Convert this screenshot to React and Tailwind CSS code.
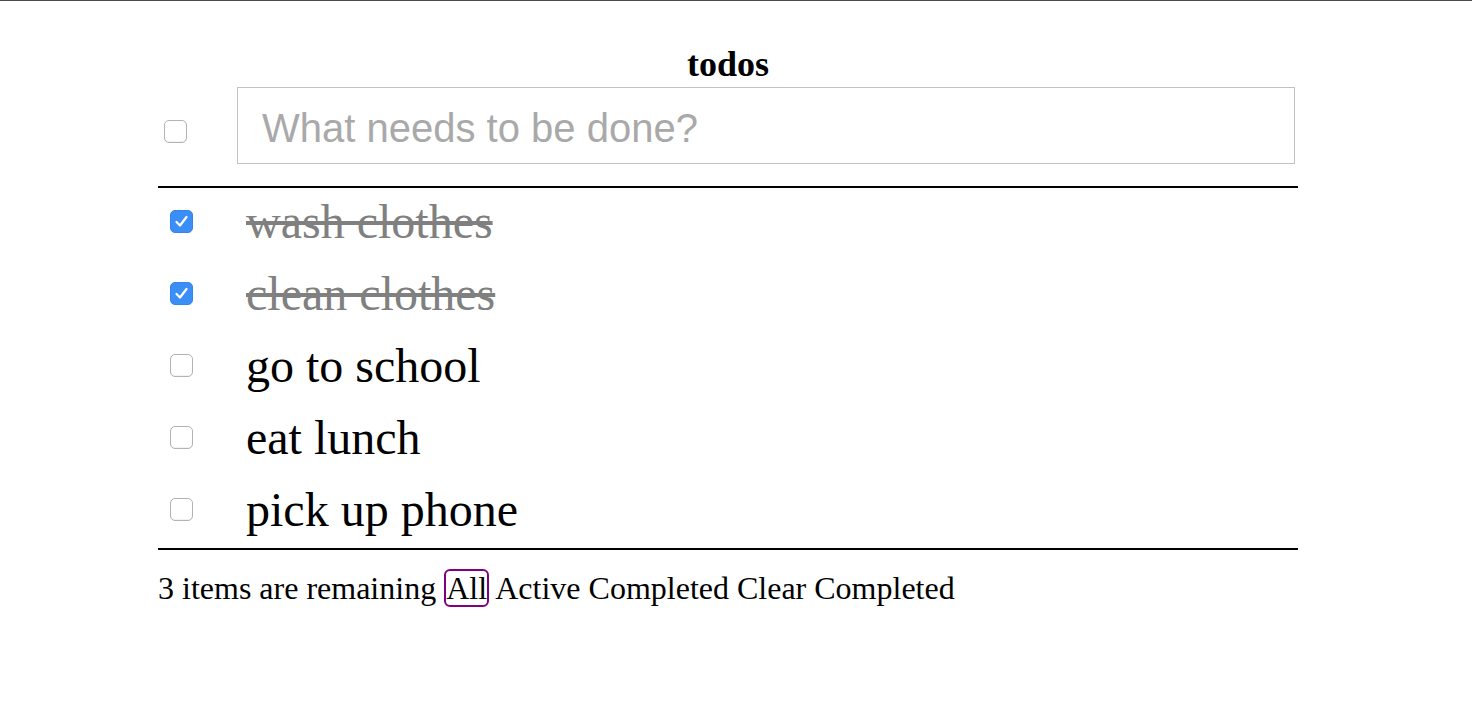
import React, { useState } from 'react'

const initialTodos = [
  { id: 1, text: 'wash clothes', done: true },
  { id: 2, text: 'clean clothes', done: true },
  { id: 3, text: 'go to school', done: false },
  { id: 4, text: 'eat lunch', done: false },
  { id: 5, text: 'pick up phone', done: false },
]

function Checkbox({ checked, onChange, className = '' }) {
  return (
    <button
      type="button"
      onClick={onChange}
      className={`shrink-0 w-[23px] h-[23px] rounded-[5px] flex items-center justify-center ${
        checked
          ? 'bg-[#3b8ef6] border border-[#3385f0]'
          : 'bg-white border border-[#b3b3b3] shadow-[inset_0_-1px_1px_rgba(0,0,0,0.06)]'
      } ${className}`}
    >
      {checked && (
        <svg width="19" height="19" viewBox="0 0 19 19" fill="none">
          <path d="M4.5 10 L8 13.5 L14.5 5" stroke="white" strokeWidth="2.2" strokeLinecap="round" strokeLinejoin="round" />
        </svg>
      )}
    </button>
  )
}

export default function App() {
  const [todos, setTodos] = useState(initialTodos)
  const [text, setText] = useState('')

  const toggle = (id) => setTodos(todos.map((t) => (t.id === id ? { ...t, done: !t.done } : t)))
  const remaining = todos.filter((t) => !t.done).length

  return (
    <div className="min-h-screen bg-white border-t border-[#4d4d4d] text-black font-['Liberation_Serif','Times_New_Roman',serif]">
      <div className="ml-[158px] w-[1140px] pt-[45px]">
        <h1 className="text-center text-[36px] leading-[36px] font-bold">todos</h1>

        <div className="flex items-start mt-[5px]">
          <Checkbox checked={false} onChange={() => {}} className="ml-[6px] mt-[33px]" />
          <input
            value={text}
            onChange={(e) => setText(e.target.value)}
            placeholder="What needs to be done?"
            className="ml-[50px] w-[1058px] h-[77px] border border-[#c2c2c2] pl-[24px] pt-[6px] text-[40px] outline-none font-['Liberation_Sans',Arial,sans-serif] placeholder:text-[#a9a9a9]"
          />
        </div>

        <ul className="mt-[22px] border-t-2 border-b-2 border-black">
          {todos.map((t) => (
            <li key={t.id} className="flex items-start h-[72px]">
              <Checkbox checked={t.done} onChange={() => toggle(t.id)} className="ml-[12px] mt-[22px]" />
              <span
                className={`ml-[53px] text-[48px] leading-[67px] ${
                  t.done ? 'text-[#808080] line-through' : 'text-black'
                }`}
              >
                {t.text}
              </span>
            </li>
          ))}
        </ul>

        <div className="mt-[19px] text-[32px] leading-[36px]">
          {remaining} items are remaining{' '}
          <span className="inline-block border-2 border-[#800080] rounded-[6px] leading-[34px]">All</span>{' '}
          <span>Active</span> <span>Completed</span> <span>Clear Completed</span>
        </div>
      </div>
    </div>
  )
}
